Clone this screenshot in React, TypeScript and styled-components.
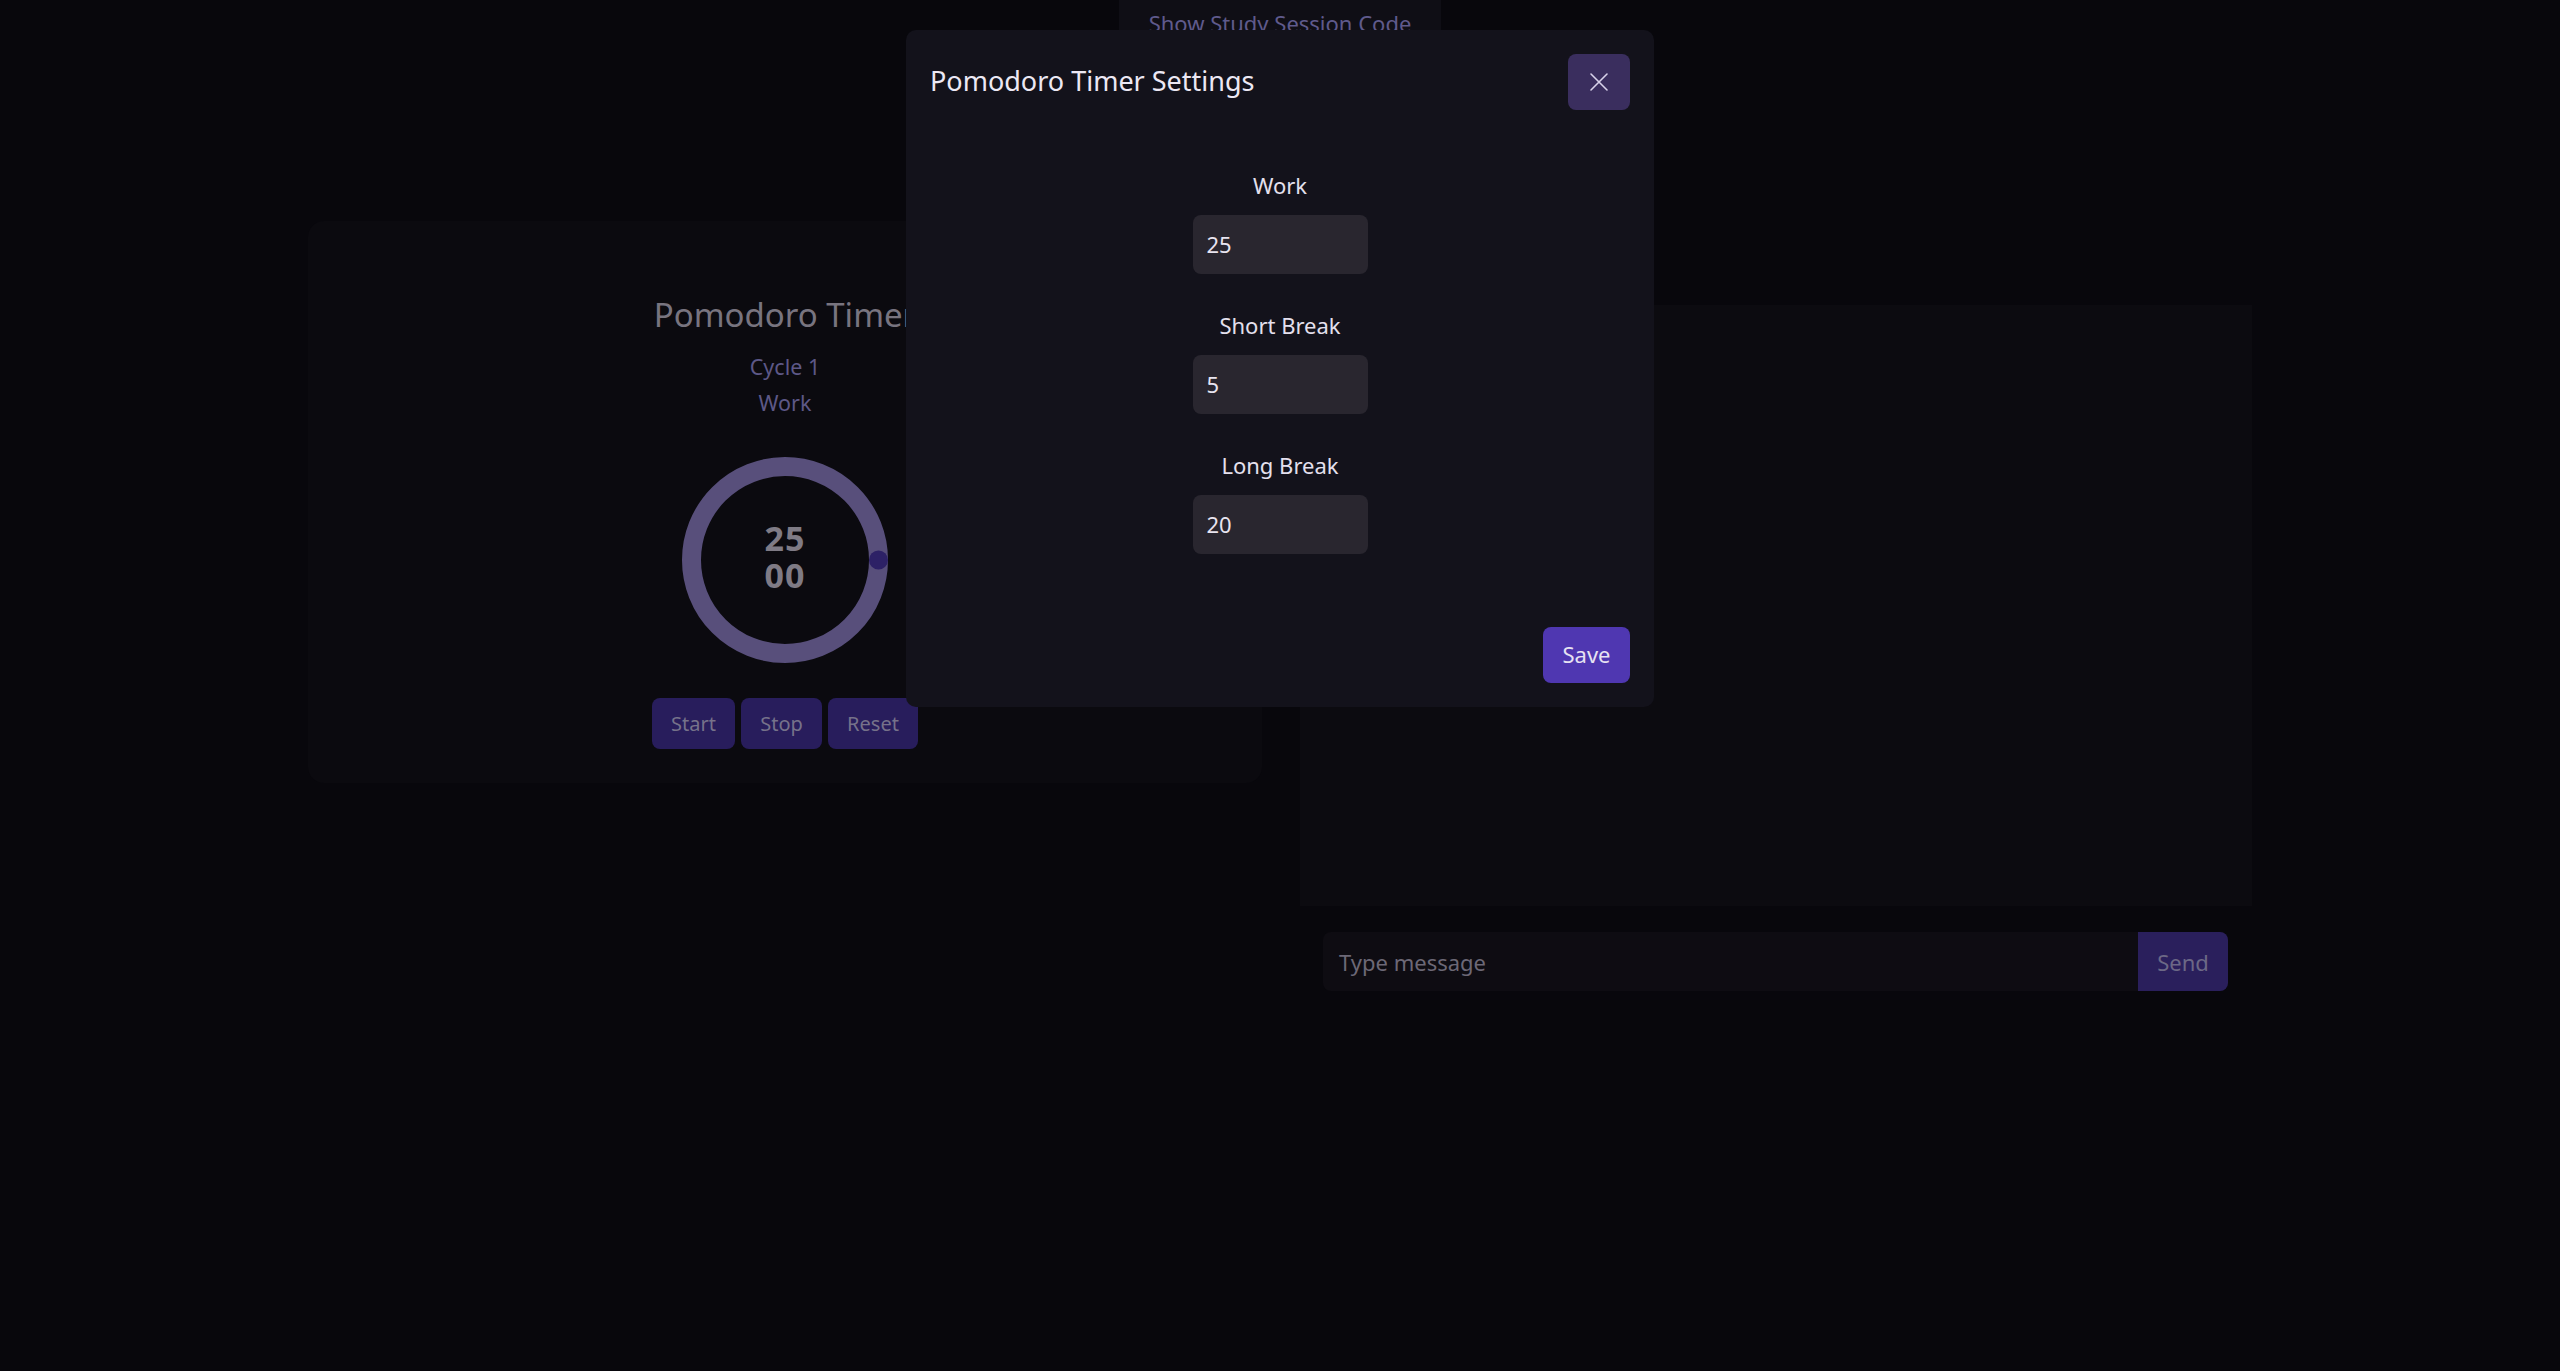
import React from "react";
import styled, { createGlobalStyle } from "styled-components";

const Global = createGlobalStyle`
  html, body { margin: 0; padding: 0; background: #08070c; }
  body { font-family: "Noto Sans", "Open Sans", sans-serif; min-height: 1371px; overflow: hidden; }
  * { box-sizing: border-box; }
`;

const Page = styled.div`
  position: relative;
  width: 2560px;
  height: 1371px;
  background: #08070c;
`;

const Header = styled.header`
  display: flex;
  justify-content: center;
`;

const CodeButton = styled.button`
  width: 322px;
  height: 60px;
  border: none;
  border-radius: 0 0 8px 8px;
  background: #0f0e15;
  color: #5f5a8c;
  font-family: inherit;
  font-size: 22px;
  padding: 8px 0 0;
  align-self: flex-start;
  display: flex;
  justify-content: center;
  align-items: flex-start;
`;

const Main = styled.main`
  display: grid;
  grid-template-columns: 954px 952px;
  column-gap: 38px;
  justify-content: center;
  padding-top: 161px;
  align-items: start;
`;

const TimerCard = styled.section`
  background: #0b0a0f;
  border-radius: 16px;
  height: 562px;
  display: flex;
  flex-direction: column;
  align-items: center;
  padding-top: 74px;
`;

const TimerTitle = styled.h2`
  margin: 0;
  font-weight: 400;
  font-size: 33px;
  line-height: 40px;
  color: #78747f;
`;

const Sub = styled.div<{ $first?: boolean }>`
  font-size: 21.5px;
  line-height: 36px;
  color: #5d5887;
  margin-top: ${(p) => (p.$first ? "14px" : "0")};
`;

const Dial = styled.div`
  position: relative;
  width: 208px;
  height: 208px;
  margin-top: 35px;
  display: flex;
  align-items: center;
  justify-content: center;
`;

const DialSvg = styled.svg`
  position: absolute;
  inset: 0;
`;

const TimeText = styled.div`
  position: relative;
  display: flex;
  flex-direction: column;
  align-items: center;
  font-size: 34px;
  font-weight: 700;
  line-height: 37px;
  letter-spacing: 1px;
  color: #7f7b85;
  margin-top: -6px;
`;

const ButtonRow = styled.div`
  display: flex;
  gap: 6px;
  margin-top: 34px;
`;

const TimerButton = styled.button<{ $w: number }>`
  width: ${(p) => p.$w}px;
  height: 51px;
  border: none;
  border-radius: 8px;
  background: #281d5c;
  color: #76728a;
  font-family: inherit;
  font-size: 20px;
`;

const ChatCard = styled.section`
  display: flex;
  flex-direction: column;
  padding-top: 84px;
`;

const Messages = styled.div`
  height: 601px;
  background: #0c0b10;
`;

const InputRow = styled.div`
  display: flex;
  margin: 26px 24px 0 23px;
  height: 59px;
  border-radius: 8px;
  overflow: hidden;
  background: #0e0c12;
`;

const ChatInput = styled.div`
  flex: 1;
  display: flex;
  align-items: center;
  padding-left: 16px;
  font-size: 22px;
  color: #6c6876;
`;

const SendButton = styled.button`
  width: 90px;
  border: none;
  background: #2a1f5c;
  color: #6c6886;
  font-family: inherit;
  font-size: 22px;
`;

const Overlay = styled.div`
  position: absolute;
  inset: 0;
  display: flex;
  justify-content: center;
  align-items: flex-start;
  padding-top: 30px;
`;

const Modal = styled.div`
  width: 748px;
  height: 677px;
  background: #13121b;
  border-radius: 10px;
  display: flex;
  flex-direction: column;
  padding: 24px;
`;

const ModalHeader = styled.div`
  display: flex;
  justify-content: space-between;
  align-items: center;
  height: 56px;
`;

const ModalTitle = styled.h3`
  margin: 0;
  font-weight: 400;
  font-size: 27px;
  line-height: 34px;
  color: #ece8f4;
  margin-top: -3px;
`;

const CloseButton = styled.button`
  width: 62px;
  height: 56px;
  border: none;
  border-radius: 8px;
  background: #3a2e5e;
  display: flex;
  align-items: center;
  justify-content: center;
  padding: 0;
`;

const Form = styled.div`
  display: flex;
  flex-direction: column;
  align-items: center;
  gap: 36px;
  margin-top: 60px;
`;

const Field = styled.label`
  display: flex;
  flex-direction: column;
  align-items: center;
  gap: 15px;
`;

const FieldLabel = styled.span`
  font-size: 22px;
  line-height: 30px;
  color: #e4e0ee;
`;

const NumberBox = styled.div`
  width: 175px;
  height: 59px;
  border-radius: 8px;
  background: #29262f;
  display: flex;
  align-items: center;
  padding-left: 14px;
  padding-bottom: 2px;
  font-size: 22px;
  color: #e8e4f0;
`;

const Footer = styled.div`
  margin-top: auto;
  display: flex;
  justify-content: flex-end;
`;

const SaveButton = styled.button`
  width: 87px;
  height: 56px;
  border: none;
  border-radius: 8px;
  background: #4f37b1;
  color: #e6e2f2;
  font-family: inherit;
  font-size: 22px;
  padding: 0 0 2px;
`;

const R = 93.5;

export default function App() {
  return (
    <Page>
      <Global />
      <Header>
        <CodeButton>Show Study Session Code</CodeButton>
      </Header>
      <Main>
        <TimerCard>
          <TimerTitle>Pomodoro Timer</TimerTitle>
          <Sub $first>Cycle 1</Sub>
          <Sub>Work</Sub>
          <Dial>
            <DialSvg width="208" height="208" viewBox="0 0 208 208">
              <circle cx="104" cy="104" r={R} fill="none" stroke="#584f7b" strokeWidth="19" />
              <circle cx={104 + R} cy="104" r="9.5" fill="#2d2166" />
            </DialSvg>
            <TimeText>
              <span>25</span>
              <span>00</span>
            </TimeText>
          </Dial>
          <ButtonRow>
            <TimerButton $w={83}>Start</TimerButton>
            <TimerButton $w={81}>Stop</TimerButton>
            <TimerButton $w={90}>Reset</TimerButton>
          </ButtonRow>
        </TimerCard>
        <ChatCard>
          <Messages />
          <InputRow>
            <ChatInput>Type message</ChatInput>
            <SendButton>Send</SendButton>
          </InputRow>
        </ChatCard>
      </Main>
      <Overlay>
        <Modal>
          <ModalHeader>
            <ModalTitle>Pomodoro Timer Settings</ModalTitle>
            <CloseButton aria-label="Close">
              <svg width="20" height="20" viewBox="0 0 20 20">
                <path d="M2 2 L18 18 M18 2 L2 18" stroke="#d8d2ea" strokeWidth="1.6" strokeLinecap="round" />
              </svg>
            </CloseButton>
          </ModalHeader>
          <Form>
            <Field>
              <FieldLabel>Work</FieldLabel>
              <NumberBox>25</NumberBox>
            </Field>
            <Field>
              <FieldLabel>Short Break</FieldLabel>
              <NumberBox>5</NumberBox>
            </Field>
            <Field>
              <FieldLabel>Long Break</FieldLabel>
              <NumberBox>20</NumberBox>
            </Field>
          </Form>
          <Footer>
            <SaveButton>Save</SaveButton>
          </Footer>
        </Modal>
      </Overlay>
    </Page>
  );
}
